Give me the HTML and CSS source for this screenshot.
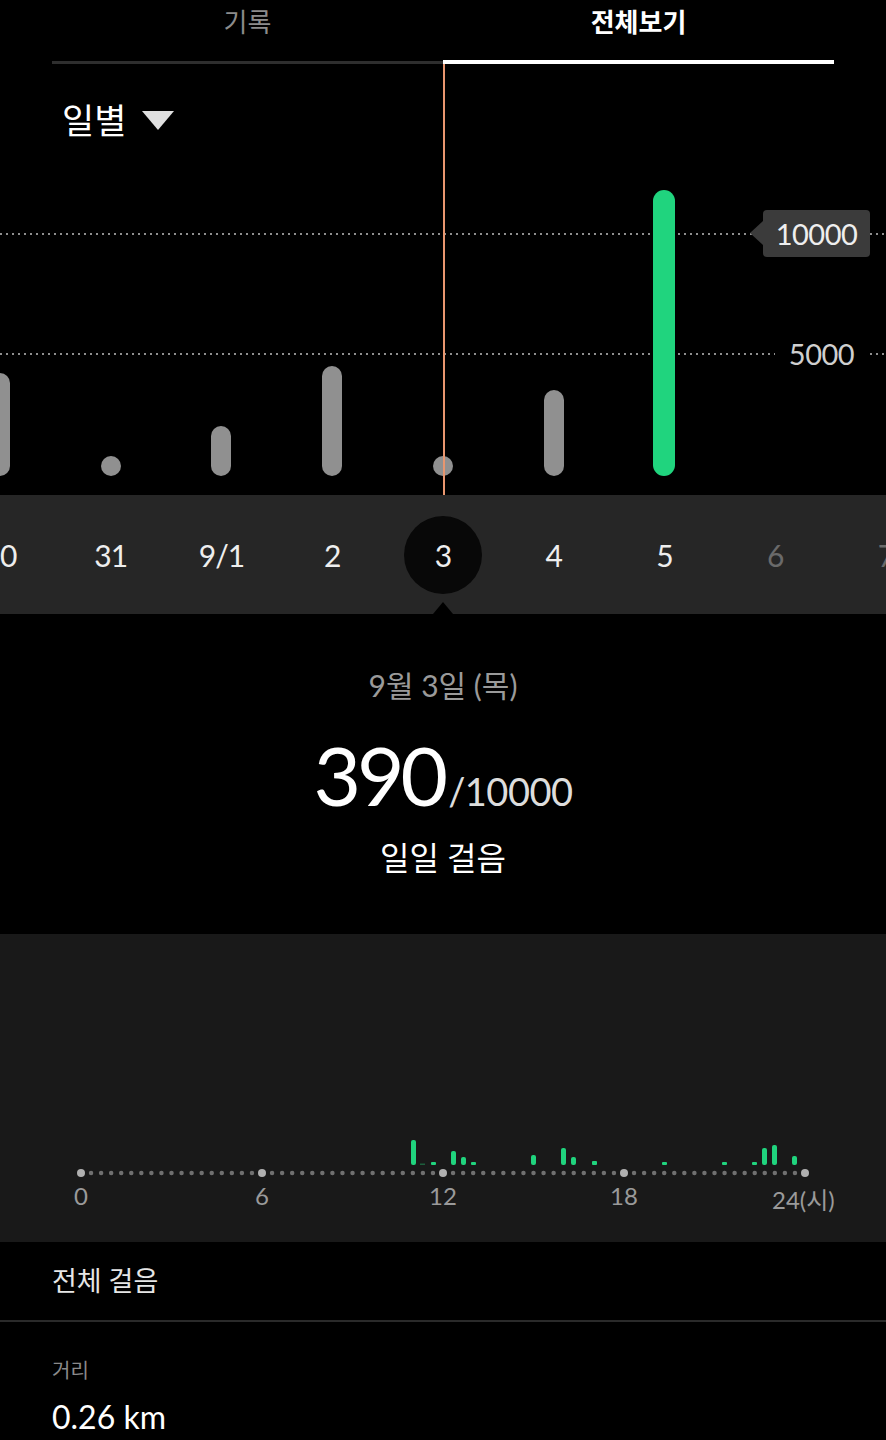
FILE: index.html
```html
<!DOCTYPE html>
<html lang="ko">
<head>
  <meta charset="utf-8">
  <title>걸음 전체보기</title>
<link rel="stylesheet" href="styles.css">
</head>

<body>
<div class="tabs">
  <div class="tab">기록</div>
  <div class="tab active">전체보기</div>
</div>

<div class="chart">
  <div class="range">일별 <span class="caret"></span></div>

  <div class="grid-line goal-line"></div>
  <div class="grid-line half-line"></div>

  <div class="bars">
    <div class="col"><div class="bar" style="height:103px"></div></div>
    <div class="col"><div class="bar" style="height:20px"></div></div>
    <div class="col"><div class="bar" style="height:50px"></div></div>
    <div class="col"><div class="bar" style="height:110px"></div></div>
    <div class="col"><div class="bar" style="height:20px"></div></div>
    <div class="col"><div class="bar" style="height:86px"></div></div>
    <div class="col"><div class="bar done" style="height:286px"></div></div>
    <div class="col"></div>
    <div class="col"></div>
  </div>

  <div class="goal-tag">10000</div>
  <div class="half-tag">5000</div>
  <div class="cursor"></div>
</div>

<div class="strip">
  <div class="dates">
    <div class="date">30</div>
    <div class="date">31</div>
    <div class="date">9/1</div>
    <div class="date">2</div>
    <div class="date"><span class="sel">3</span></div>
    <div class="date">4</div>
    <div class="date">5</div>
    <div class="date future">6</div>
    <div class="date future">7</div>
  </div>
</div>

<div class="summary">
  <div class="day">9월 3일 (목)</div>
  <div class="total">390<span class="goal">/10000</span></div>
  <div class="caption">일일 걸음</div>
</div>

<div class="hourly">
  <svg width="886" height="308" viewBox="0 0 886 308">
    <g fill="#20d47e">
      <rect x="411" y="206" width="5" height="25" rx="2"/>
      <rect x="420" y="229.5" width="5" height="1.5" fill="#1d5e3c"/>
      <rect x="431" y="228" width="5" height="3" rx="1"/>
      <rect x="451" y="217" width="5" height="14" rx="2"/>
      <rect x="461" y="223" width="5" height="8" rx="2"/>
      <rect x="471" y="228" width="5" height="3" rx="1"/>
      <rect x="531" y="221" width="5" height="10" rx="2"/>
      <rect x="561" y="214" width="5" height="17" rx="2"/>
      <rect x="571" y="223" width="5" height="8" rx="2"/>
      <rect x="592" y="227" width="5" height="4" rx="1"/>
      <rect x="662" y="228" width="5" height="3" rx="1"/>
      <rect x="722" y="228" width="5" height="3" rx="1"/>
      <rect x="752" y="228" width="5" height="3" rx="1"/>
      <rect x="762" y="214" width="5" height="17" rx="2"/>
      <rect x="772" y="211" width="5" height="20" rx="2"/>
      <rect x="792" y="222" width="5" height="9" rx="2"/>
    </g>
    <line x1="81" y1="239" x2="806" y2="239" stroke="#707070" stroke-width="4.5" stroke-linecap="round" stroke-dasharray="0 10.0556"/>
    <g fill="#b0b0b0">
      <circle cx="81" cy="239" r="4"/>
      <circle cx="262" cy="239" r="4"/>
      <circle cx="443" cy="239" r="4"/>
      <circle cx="624" cy="239" r="4"/>
      <circle cx="805" cy="239" r="4"/>
    </g>
    <g class="axis-label">
      <text x="81" y="271" text-anchor="middle">0</text>
      <text x="262" y="271" text-anchor="middle">6</text>
      <text x="443" y="271" text-anchor="middle">12</text>
      <text x="624" y="271" text-anchor="middle">18</text>
      <text x="772" y="275">24(시)</text>
    </g>
  </svg>
</div>

<div class="stat-head">전체 걸음</div>
<div class="stat">
  <div class="stat-label">거리</div>
  <div class="stat-value">0.26 km</div>
</div>
</body>
</html>
```

FILE: styles.css
```css
body {
  margin: 0;
  background: #000;
  color: #fff;
  font-family: Lato, "Noto Sans CJK KR", sans-serif;
  overflow-x: hidden;
}

.tabs {
  display: flex;
  height: 64px;
  padding: 0 52px;
}

.tab {
  flex: 1;
  text-align: center;
  font-size: 26px;
  line-height: 44px;
  color: #8c8c8c;
  border-bottom: 3px solid #2e2e2e;
}

.tab.active {
  color: #fff;
  font-weight: bold;
  border-bottom: 4px solid #fff;
}

/* daily chart */
.chart {
  position: relative;
  height: 431px;
  display: flex;
  flex-direction: column;
  overflow: hidden;
}

.range {
  padding: 30px 0 0 62px;
  font-size: 35px;
  line-height: 52px;
  display: flex;
  align-items: center;
  gap: 16px;
}

.caret {
  width: 0;
  height: 0;
  border-left: 16px solid transparent;
  border-right: 16px solid transparent;
  border-top: 19px solid #e0e0e0;
}

.grid-line {
  position: absolute;
  left: 0;
  right: 0;
  height: 2px;
  background: linear-gradient(to right, #8e8e8e 2px, transparent 2px) 0 0 / 6px 2px repeat-x;
}

.goal-line {
  top: 169px;
}

.half-line {
  top: 289px;
}

.bars {
  position: relative;
  flex: 1;
  display: flex;
  align-items: flex-end;
  margin-left: -55.4px;
  padding-bottom: 19px;
}

.col {
  flex: none;
  width: 110.75px;
  display: flex;
  justify-content: center;
}

.bar {
  width: 20px;
  border-radius: 10px;
  background: #909090;
}

.bar.done {
  width: 22px;
  border-radius: 11px;
  background: #20d47e;
}

.goal-tag {
  position: absolute;
  left: 763px;
  top: 146px;
  width: 107px;
  height: 47px;
  background: #3b3b3b;
  border-radius: 4px;
  font-size: 29px;
  line-height: 47px;
  letter-spacing: -0.5px;
  text-align: center;
  color: #eee;
}

.goal-tag::before {
  content: "";
  position: absolute;
  left: -13px;
  top: 11px;
  border-top: 12px solid transparent;
  border-bottom: 12px solid transparent;
  border-right: 13px solid #3b3b3b;
}

.half-tag {
  position: absolute;
  left: 775px;
  top: 270px;
  width: 93px;
  line-height: 40px;
  background: #000;
  text-align: center;
  font-size: 29px;
  letter-spacing: -0.5px;
  color: #cfcfcf;
}

.cursor {
  position: absolute;
  left: 443px;
  top: 0;
  bottom: 0;
  width: 1.5px;
  background: #e8966f;
}

/* date strip */
.strip {
  position: relative;
  height: 119px;
  background: #262626;
  overflow: hidden;
}

.strip::after {
  content: "";
  position: absolute;
  bottom: 0;
  left: 433px;
  border-left: 10px solid transparent;
  border-right: 10px solid transparent;
  border-bottom: 12px solid #000;
}

.dates {
  display: flex;
  height: 100%;
  align-items: center;
  margin-left: -55.4px;
}

.date {
  flex: none;
  width: 110.75px;
  display: flex;
  justify-content: center;
  font-size: 30px;
  letter-spacing: -1px;
  color: #eee;
}

.date.future {
  color: #6a6a6a;
}

.sel {
  width: 78px;
  height: 78px;
  border-radius: 50%;
  background: #080808;
  display: flex;
  align-items: center;
  justify-content: center;
}

/* selected day */
.summary {
  height: 269px;
  padding-top: 51px;
  text-align: center;
}

.day {
  font-size: 30px;
  line-height: 40px;
  color: #9a9a9a;
}

.total {
  margin-top: 28px;
  font-size: 82px;
  line-height: 1;
  letter-spacing: -4px;
}

.goal {
  font-size: 38px;
  letter-spacing: -0.5px;
  color: #ddd;
  margin-left: 4px;
}

.caption {
  margin-top: 23px;
  font-size: 32px;
  line-height: 40px;
}

.hourly {
  height: 308px;
  background: #191919;
}

.hourly svg {
  display: block;
}

.axis-label {
  font-family: Lato, "Noto Sans CJK KR", sans-serif;
  font-size: 24px;
  fill: #9a9a9a;
}

.stat-head {
  height: 78px;
  padding-left: 52px;
  font-size: 27px;
  line-height: 78px;
  color: #e6e6e6;
  border-bottom: 2px solid #2a2a2a;
}

.stat {
  padding: 34px 52px 0;
}

.stat-label {
  font-size: 20px;
  line-height: 28px;
  color: #8a8a8a;
}

.stat-value {
  margin-top: 13px;
  font-size: 32px;
  line-height: 40px;
}
```
